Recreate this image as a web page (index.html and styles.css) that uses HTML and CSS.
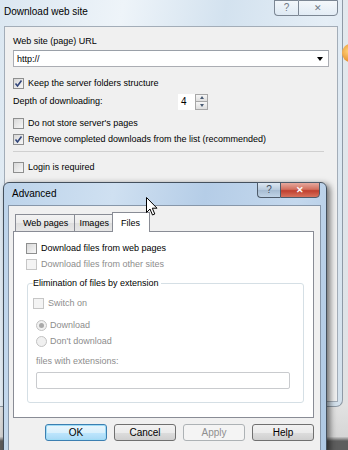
FILE: index.html
```html
<!DOCTYPE html>
<html>
  <head>
    <title>Download web site</title>
    <link rel="stylesheet" href="styles.css">
  </head>
  <body>
    <div class="desk">
      <span class="desk-icon"></span>

      <div class="window back">
        <div class="caption">
          <span class="title">Download web site</span>
          <div class="capbtns">
            <span class="cb cb-help">?</span>
            <span class="cb cb-close">&#x2715;</span>
          </div>
        </div>
        <div class="client">
          <div class="row first">Web site (page) URL</div>
          <div class="combo">
            <span>http://</span>
            <span class="arrow"></span>
          </div>
          <div class="row check-row gap8">
            <span class="cbx checked"><svg width="9" height="9" viewBox="0 0 9 9"><path d="M1.5 4.5 L3.5 7 L7.5 1.5" fill="none" stroke="#31457a" stroke-width="1.6"/></svg></span>
            Keep the server folders structure
          </div>
          <div class="row depth">
            <span class="depth-label">Depth of downloading:</span>
            <div class="spin">
              <span class="spin-val">4</span>
              <span class="spin-btns">
                <span class="sb"><i class="up"></i></span>
                <span class="sb"><i class="down"></i></span>
              </span>
            </div>
          </div>
          <div class="row check-row gap6">
            <span class="cbx"></span>
            Do not store server's pages
          </div>
          <div class="row check-row">
            <span class="cbx checked"><svg width="9" height="9" viewBox="0 0 9 9"><path d="M1.5 4.5 L3.5 7 L7.5 1.5" fill="none" stroke="#31457a" stroke-width="1.6"/></svg></span>
            Remove completed downloads from the list (recommended)
          </div>
          <div class="separator"></div>
          <div class="row check-row gap7">
            <span class="cbx"></span>
            Login is required
          </div>
        </div>
      </div>

      <div class="window adv">
        <div class="caption">
          <span class="title">Advanced</span>
          <div class="capbtns">
            <span class="cb cb-help">?</span>
            <span class="cb cb-close">&#x2715;</span>
          </div>
        </div>
        <div class="client">
          <div class="tabs">
            <span class="tab wide">Web pages</span>
            <span class="tab">Images</span>
            <span class="tab active">Files</span>
          </div>
          <div class="panel">
            <div class="row check-row gap8">
              <span class="cbx"></span>
              Download files from web pages
            </div>
            <div class="row check-row disabled">
              <span class="cbx"></span>
              Download files from other sites
            </div>
            <fieldset class="group">
              <legend>Elimination of files by extension</legend>
              <div class="row check-row disabled gap4">
                <span class="cbx"></span>
                Switch on
              </div>
              <div class="indent">
                <div class="row check-row disabled gap6">
                  <span class="radio on"></span>
                  Download
                </div>
                <div class="row check-row disabled">
                  <span class="radio"></span>
                  Don't download
                </div>
                <div class="row disabled gap4">files with extensions:</div>
                <div class="ext-input"></div>
              </div>
            </fieldset>
          </div>
          <div class="buttons">
            <span class="btn default">OK</span>
            <span class="btn">Cancel</span>
            <span class="btn off">Apply</span>
            <span class="btn">Help</span>
          </div>
        </div>
      </div>

      <svg class="cursor" width="13" height="20" viewBox="0 0 13 20">
        <path d="M0.5 0.5 L0.5 15.5 L4 12 L6.5 18 L8.8 17 L6.3 11.2 L11 11.2 Z" fill="#fff" stroke="#000" stroke-width="1"/>
      </svg>
    </div>
  </body>
</html>
```

FILE: styles.css
```css
* {
  box-sizing: border-box;
}
body {
  margin: 0;
  font-family: "Liberation Sans", Arial, sans-serif;
  font-size: 9px;
  color: #000;
}
.desk {
  position: relative;
  width: 348px;
  height: 450px;
  overflow: hidden;
  background: linear-gradient(#e3e9ee 0, #dfe3e7 70%, #e2e2e2 90%, #d6d6d6 97%, #5e5e5e 98%);
}
.desk-icon {
  position: absolute;
  left: 342px;
  top: 44px;
  width: 16px;
  height: 18px;
  border-radius: 50%;
  background: radial-gradient(circle at 40% 40%, #ffd27a, #e07a12);
}

/* window frames */
.window {
  display: flex;
  flex-direction: column;
}
.caption {
  display: flex;
  justify-content: space-between;
  align-items: flex-start;
  flex: none;
}
.title {
  font-size: 10px;
  line-height: 14px;
}
.capbtns {
  display: flex;
}
.cb {
  height: 16px;
  border: 1px solid #7c8794;
  text-align: center;
  font-size: 10px;
  line-height: 14px;
  color: #6e7884;
  background: linear-gradient(rgba(255, 255, 255, 0.6), rgba(225, 235, 245, 0.3));
}
.cb-help {
  width: 24px;
  border-radius: 0 0 0 4px;
  border-right: none;
}
.cb-close {
  width: 40px;
  border-radius: 0 0 4px 0;
  font-size: 9px;
}

.back {
  width: 343px;
  height: 407px;
  padding: 0 4px 4px 4px;
  border: 1px solid #8f9aa6;
  border-top: none;
  border-left: none;
  border-radius: 0 0 7px 0;
  background: linear-gradient(100deg, #dbe7f1 0, #eef4f9 30%, #d3e2ef 55%, #e5eef6 80%, #d2e0ec 100%);
}
.back .caption {
  height: 26px;
}
.back .title {
  padding-top: 5px;
}
.back .client {
  flex: 1;
  background: #f0f0f0;
  border: 1px solid #a3adb8;
  padding: 0 8px;
}

.row {
  height: 16px;
  line-height: 16px;
  white-space: nowrap;
}
.first {
  margin-top: 6px;
}
.check-row {
  display: flex;
  align-items: center;
}
.gap4 {
  margin-top: 4px;
}
.gap6 {
  margin-top: 6px;
}
.gap7 {
  margin-top: 7px;
}
.gap8 {
  margin-top: 8px;
}

.combo {
  margin-top: 1px;
  height: 17px;
  border: 1px solid #abadb3;
  border-top-color: #9aa0a8;
  background: #fff;
  display: flex;
  justify-content: space-between;
  align-items: center;
  padding: 0 5px 0 3px;
}
.arrow {
  width: 0;
  height: 0;
  border-left: 3.5px solid transparent;
  border-right: 3.5px solid transparent;
  border-top: 4px solid #000;
}

.cbx {
  flex: none;
  width: 11px;
  height: 11px;
  margin-right: 4px;
  border: 1px solid #8e8f8f;
  background: linear-gradient(135deg, #d8d8d8, #f7f7f7);
  display: flex;
  align-items: center;
  justify-content: center;
}
.radio {
  flex: none;
  width: 11px;
  height: 11px;
  margin-right: 3px;
  border: 1px solid #c2c2c2;
  border-radius: 50%;
  background: #f0f0f0;
  display: flex;
  align-items: center;
  justify-content: center;
}
.radio.on::after {
  content: "";
  width: 5px;
  height: 5px;
  border-radius: 50%;
  background: #a9a9a9;
}
.disabled {
  color: #8d8d8d;
}
.disabled .cbx {
  border-color: #c6c6c6;
  background: #f4f4f4;
}

.depth {
  margin-top: 1px;
  height: 17px;
  display: flex;
  align-items: center;
}
.depth-label {
  width: 165px;
}
.spin {
  display: flex;
  height: 16px;
  margin-top: 2px;
}
.spin-val {
  width: 17px;
  line-height: 16px;
  padding-left: 3px;
  background: #fff;
  font-size: 10px;
}
.spin-btns {
  display: flex;
  flex-direction: column;
  width: 13px;
}
.sb {
  flex: 1;
  border: 1px solid #a7a7a7;
  background: linear-gradient(#f6f6f6, #dedede);
  display: flex;
  align-items: center;
  justify-content: center;
}
.sb + .sb {
  border-top: none;
}
.up {
  border-left: 2.5px solid transparent;
  border-right: 2.5px solid transparent;
  border-bottom: 3px solid #4a5c74;
}
.down {
  border-left: 2.5px solid transparent;
  border-right: 2.5px solid transparent;
  border-top: 3px solid #4a5c74;
}
.separator {
  margin: 4px 5px 0 0;
  height: 1px;
  background: #d0d0d0;
}

/* Advanced dialog */
.adv {
  position: absolute;
  left: 3px;
  top: 182px;
  width: 324px;
  height: 270px;
  padding: 0 5px 0 4px;
  border: 1px solid #44505d;
  border-radius: 6px 6px 0 0;
  background: linear-gradient(100deg, #bcd3ea 0, #cfe0f1 30%, #b5cde7 55%, #c4d8ed 80%, #aec8e3 100%);
  box-shadow: 3px 2px 6px rgba(0, 0, 0, 0.55);
}
.adv .caption {
  height: 22px;
}
.adv .title {
  padding: 4px 0 0 4px;
}
.adv .capbtns {
  margin-top: -1px;
  margin-right: 1px;
}
.adv .cb {
  border-color: #4e5b6a;
  color: #fff;
  height: 16px;
}
.adv .cb-help {
  width: 23px;
  color: #3e4c5c;
  background: linear-gradient(#dce7f2, #b7c9dc 50%, #a6bbd1 51%, #c0d3e6);
}
.adv .cb-close {
  width: 40px;
  background: linear-gradient(#e6a99e, #d2705f 45%, #c0402f 55%, #d8725d);
  font-weight: bold;
}
.adv .client {
  flex: 1;
  background: #f0f0f0;
  border: 1px solid #8797aa;
  padding: 0 6px 0 4px;
}

.tabs {
  display: flex;
  align-items: flex-end;
  height: 25px;
  padding-left: 2px;
}
.tab {
  height: 17px;
  line-height: 16px;
  padding: 0 4px;
  border: 1px solid #898c95;
  border-bottom: none;
  background: linear-gradient(#f3f3f3, #ebebeb 50%, #dedede 51%, #e7e7e7);
}
.tab.wide {
  padding: 0 6px 0 7px;
}
.tab + .tab {
  border-left: none;
}
.tab.active {
  height: 20px;
  margin-bottom: -1px;
  padding: 2px 9px 0 8px;
  background: #fff;
  position: relative;
  border-left: 1px solid #898c95;
  margin-left: -2px;
}
.panel {
  height: 187px;
  border: 1px solid #898c95;
  background: #fff;
  padding: 0 9px 0 12px;
}
.group {
  margin: 3px 0 0 1px;
  padding: 0 0 13px 5px;
  border: 1px solid #d5dfe5;
  border-radius: 3px;
}
.group legend {
  padding: 0 2px 0 0;
  line-height: 16px;
}
.indent {
  padding-left: 3px;
}
.ext-input {
  margin-top: 3px;
  width: 254px;
  height: 17px;
  border: 1px solid #c9cbce;
  border-radius: 2px;
  background: #fff;
}

.buttons {
  display: flex;
  justify-content: flex-end;
  gap: 7px;
  margin-top: 6px;
}
.btn {
  width: 62px;
  height: 17px;
  line-height: 15px;
  text-align: center;
  font-size: 10px;
  border: 1px solid #707070;
  border-radius: 3px;
  background: linear-gradient(#f2f2f2, #ebebeb 50%, #dddddd 51%, #cfcfcf);
}
.btn.default {
  border-color: #3c7fb1;
  box-shadow: inset 0 0 0 1px #9fdcf6;
  background: linear-gradient(#eaf6fd, #d9f0fc 50%, #bee6fd 51%, #a7d9f5);
}
.btn.off {
  color: #8f8f8f;
  border-color: #adb2b5;
  background: #f4f4f4;
}

.cursor {
  position: absolute;
  left: 146px;
  top: 197px;
}
```
